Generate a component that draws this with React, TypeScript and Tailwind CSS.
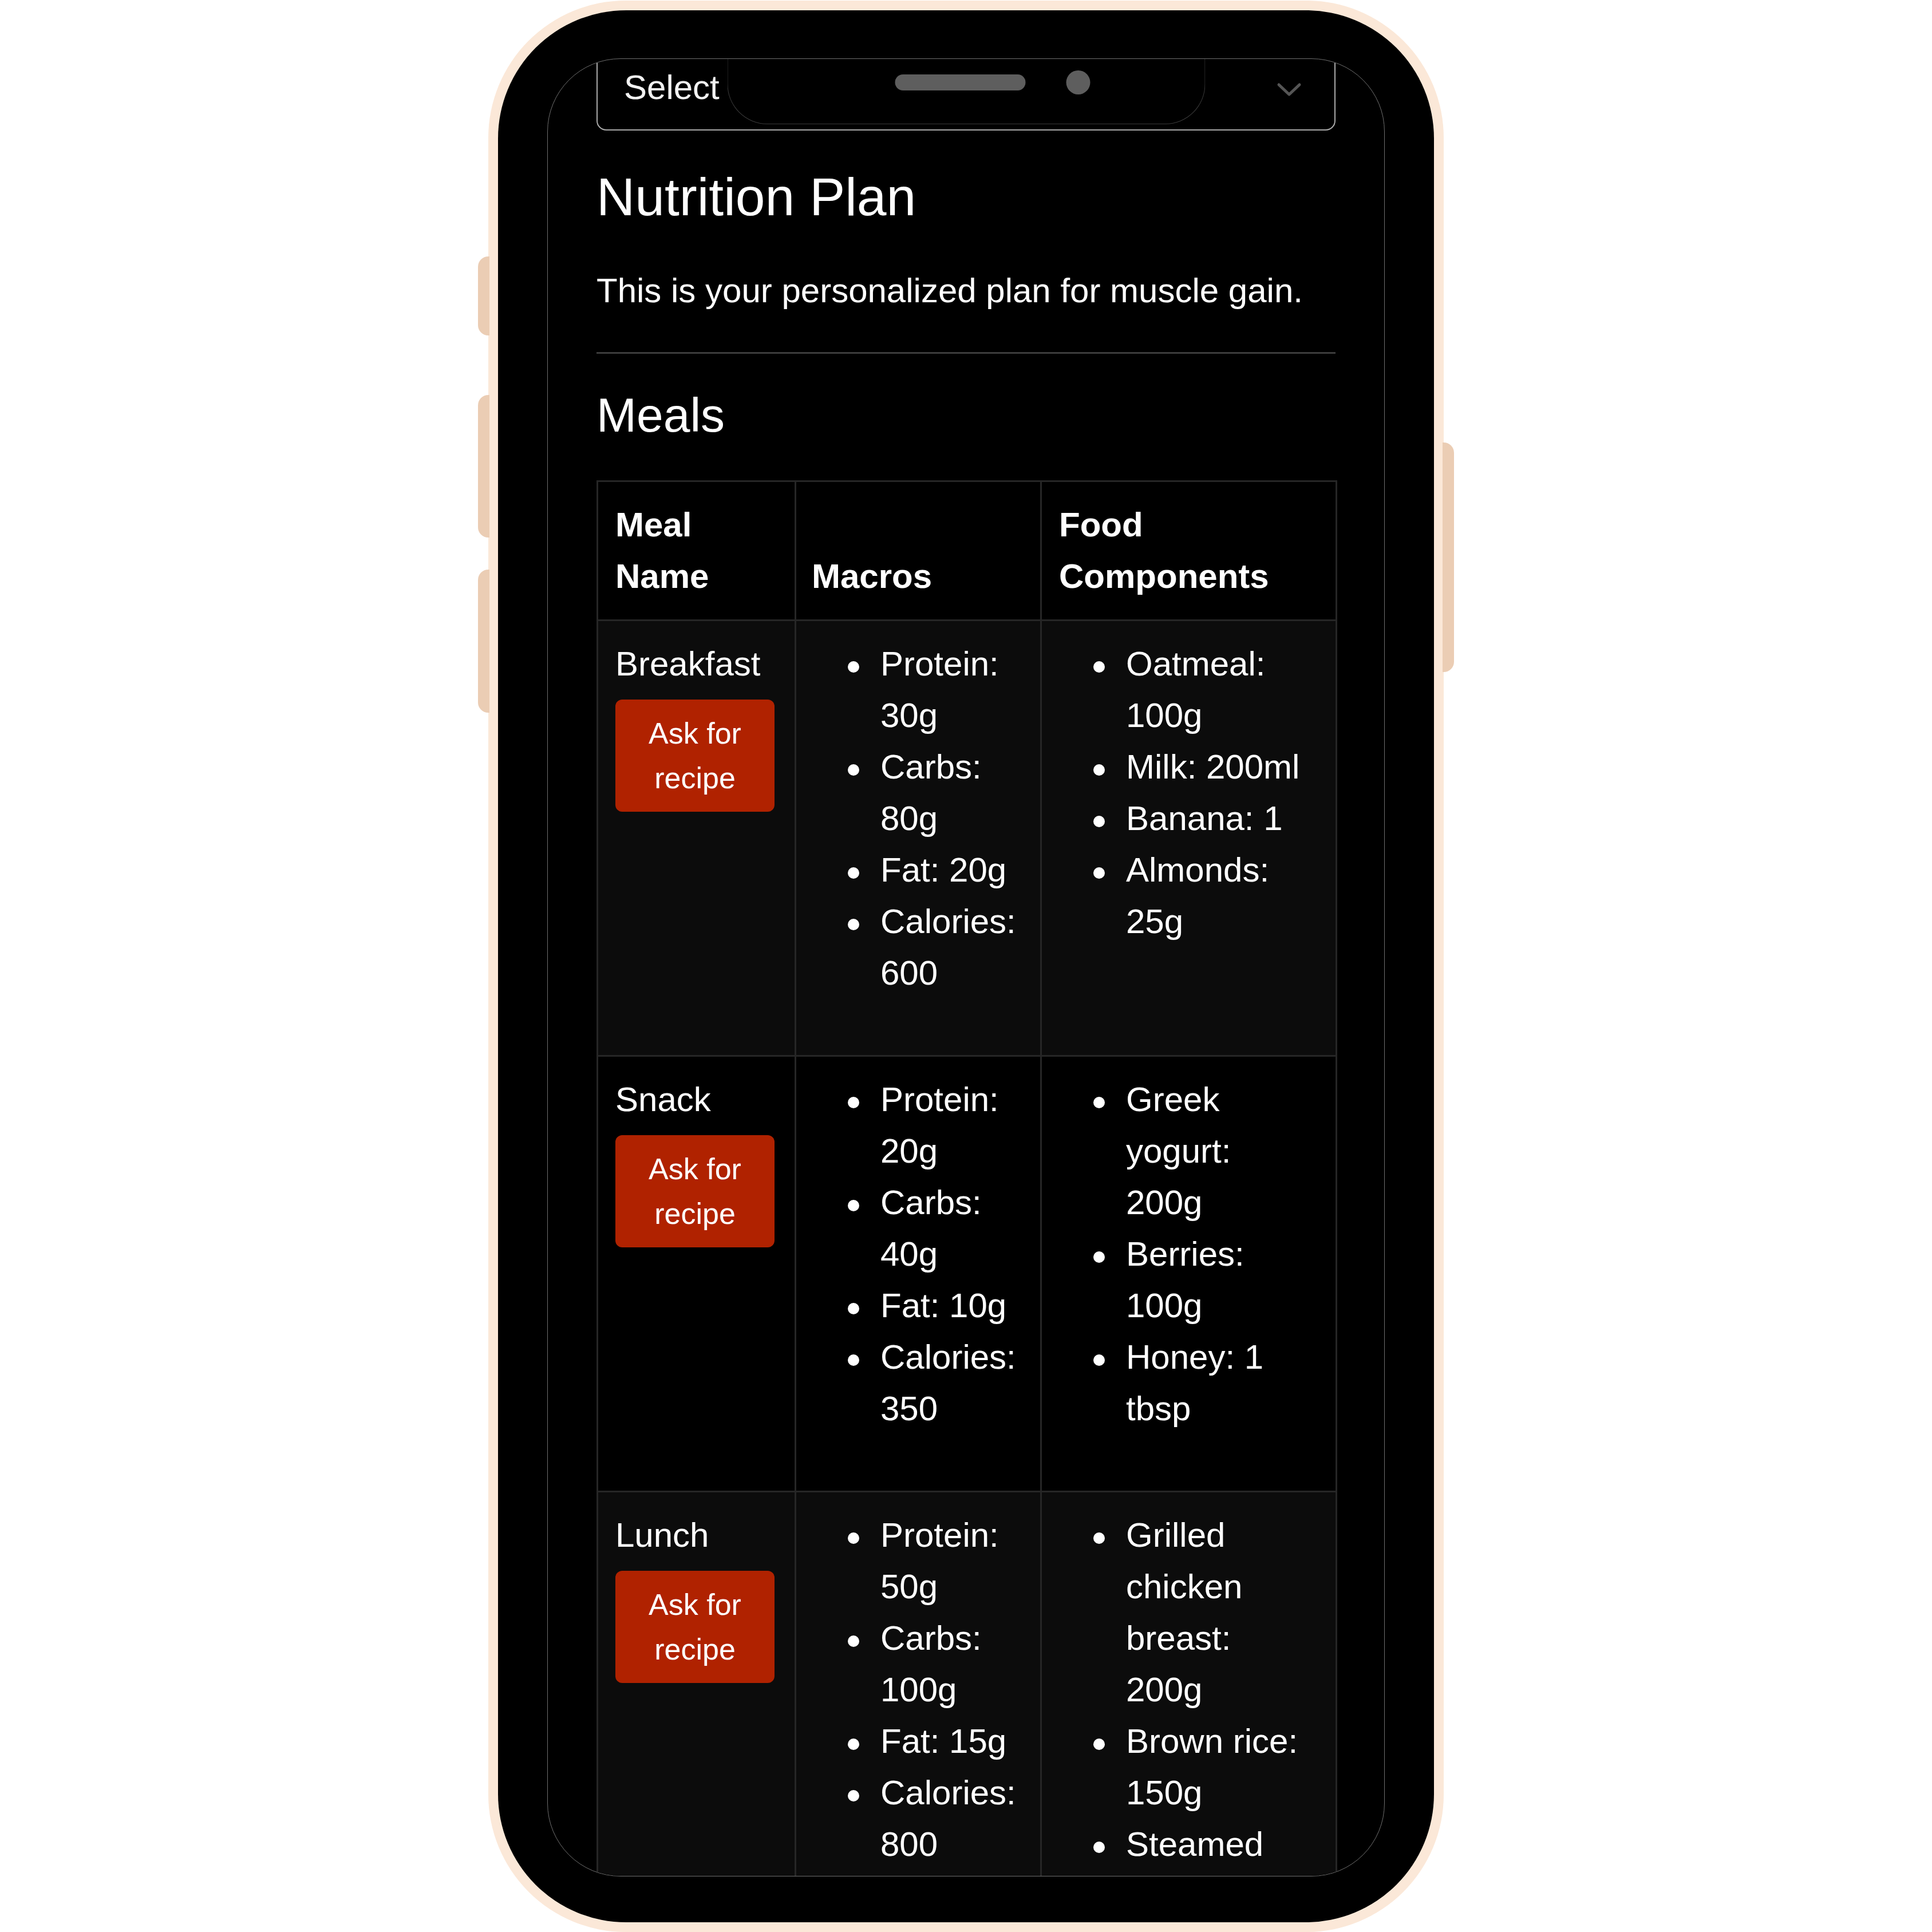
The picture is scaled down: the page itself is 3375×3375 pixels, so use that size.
import React from "react";

type Row = { name: string; macros: string[]; food: string[]; bg: string };

const rows: Row[] = [
  {
    name: "Breakfast",
    macros: ["Protein: 30g", "Carbs: 80g", "Fat: 20g", "Calories: 600"],
    food: ["Oatmeal: 100g", "Milk: 200ml", "Banana: 1", "Almonds: 25g"],
    bg: "bg-[#0c0c0c]",
  },
  {
    name: "Snack",
    macros: ["Protein: 20g", "Carbs: 40g", "Fat: 10g", "Calories: 350"],
    food: ["Greek yogurt: 200g", "Berries: 100g", "Honey: 1 tbsp"],
    bg: "bg-black",
  },
  {
    name: "Lunch",
    macros: ["Protein: 50g", "Carbs: 100g", "Fat: 15g", "Calories: 800"],
    food: ["Grilled chicken breast: 200g", "Brown rice: 150g", "Steamed vegetables: 100g"],
    bg: "bg-[#0c0c0c]",
  },
];

function Bullets({ items, extraPad }: { items: string[]; extraPad?: boolean }) {
  return (
    <ul className={extraPad ? "mb-[68px] pr-[12px]" : "mb-[68px]"}>
      {items.map((it) => (
        <li key={it} className="flex">
          <span className="block h-[90px] w-[117px] shrink-0 pl-[60px] pt-[40px]">
            <span className="block h-[20px] w-[20px] rounded-full bg-white" />
          </span>
          <span className="min-w-0 flex-1">{it}</span>
        </li>
      ))}
    </ul>
  );
}

export default function App() {
  return (
    <div className="flex h-[3375px] w-[3375px] items-center justify-center bg-white font-['Liberation_Sans',Arial,sans-serif]">
      <div className="relative h-[3374px] w-[1669px] rounded-[240px] bg-[#fbe8d8] p-[17px]">
        {/* side buttons */}
        <div className="absolute left-[-18px] top-[447px] h-[138px] w-[20px] rounded-l-[18px] bg-[#ebcdb4]" />
        <div className="absolute left-[-18px] top-[689px] h-[249px] w-[20px] rounded-l-[18px] bg-[#ebcdb4]" />
        <div className="absolute left-[-18px] top-[994px] h-[250px] w-[20px] rounded-l-[18px] bg-[#ebcdb4]" />
        <div className="absolute right-[-18px] top-[772px] h-[401px] w-[20px] rounded-r-[18px] bg-[#ebcdb4]" />

        <div className="flex h-full w-full flex-col rounded-[224px] bg-black px-[86px] pb-[80px] pt-[84px]">
          <div className="relative flex-1 overflow-hidden rounded-[128px] border border-[#6e6e6e] bg-black">
            {/* notch */}
            <div className="absolute left-1/2 top-[-1px] z-10 h-[115px] w-[835px] -translate-x-1/2 rounded-b-[70px] border-x border-b border-[#3a3a3a] bg-black">
              <div className="absolute left-[292px] top-[28px] h-[28px] w-[228px] rounded-full bg-[#5e5e5e]" />
              <div className="absolute left-[591px] top-[21px] h-[42px] w-[42px] rounded-full bg-[#5e5e5e]" />
            </div>

            <div className="-mt-[25px] px-[85px] text-white">
              {/* select */}
              <div className="flex h-[150px] items-center justify-between rounded-[17px] border-2 border-[#a9a9a9] pl-[46px] pr-[57px]">
                <span className="text-[60px] leading-[90px] text-[#f2f2f2]">Select</span>
                <svg width="44" height="26" viewBox="0 0 44 26" className="mt-[8px]">
                  <path d="M4 4 L22 21 L40 4" fill="none" stroke="#555555" strokeWidth="5" strokeLinecap="round" strokeLinejoin="round" />
                </svg>
              </div>

              <h1 className="mt-[63px] text-[93px] leading-[106px] font-normal">Nutrition Plan</h1>
              <p className="mt-[66px] text-[60px] leading-[90px]">This is your personalized plan for muscle gain.</p>
              <div className="mt-[62px] h-[3px] bg-[#3c3c3c]" />
              <h2 className="mt-[57px] text-[84px] leading-[100px] font-normal">Meals</h2>

              <table className="mt-[64px] w-[1291px] table-fixed border-collapse text-[60px] leading-[90px]">
                <colgroup>
                  <col className="w-[346px]" />
                  <col className="w-[429px]" />
                  <col className="w-[516px]" />
                </colgroup>
                <thead>
                  <tr className="bg-black">
                    <th className="border-[3px] border-[#262626] p-[30px] text-left align-bottom font-bold">Meal Name</th>
                    <th className="border-[3px] border-[#262626] py-[30px] pl-[27px] pr-[30px] text-left align-bottom font-bold">Macros</th>
                    <th className="border-[3px] border-[#262626] p-[30px] text-left align-bottom font-bold">Food Components</th>
                  </tr>
                </thead>
                <tbody>
                  {rows.map((r) => (
                    <tr key={r.name} className={r.bg}>
                      <td className="border-[3px] border-[#262626] p-[30px] align-top">
                        <div>{r.name}</div>
                        <button className="mt-[17px] block w-[278px] rounded-[12px] bg-[#b02200] py-[20px] text-center text-[52px] leading-[78px] text-white">
                          Ask for recipe
                        </button>
                      </td>
                      <td className="border-[3px] border-[#262626] p-[30px] align-top">
                        <Bullets items={r.macros} />
                      </td>
                      <td className="border-[3px] border-[#262626] p-[30px] align-top">
                        <Bullets items={r.food} extraPad />
                      </td>
                    </tr>
                  ))}
                </tbody>
              </table>
            </div>
          </div>
        </div>
      </div>
    </div>
  );
}
